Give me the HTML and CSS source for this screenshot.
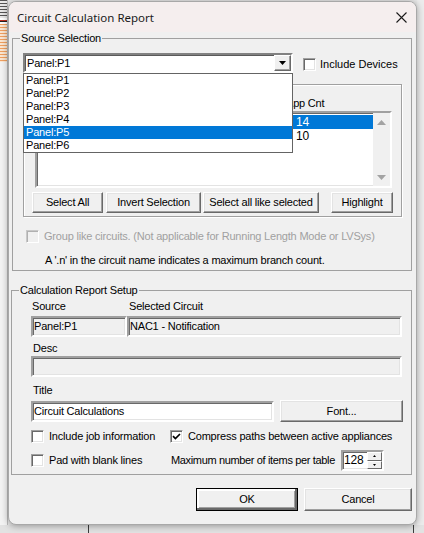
FILE: index.html
```html
<!DOCTYPE html>
<html>
<head>
<meta charset="utf-8">
<link rel="stylesheet" href="styles.css">
</head>
<body>
<div class="screen">
  <div class="top">
    <div class="side-left">
      <div class="sl-grip"></div>
      <div class="sl-red"></div>
      <div class="sl-orange"></div>
      <div class="sl-rest"></div>
    </div>
    <div class="dialog">
      <div class="titlebar">
        <span class="title">Circuit Calculation Report</span>
        <svg class="close" width="11" height="11" viewBox="0 0 11 11"><path d="M0.5 0.5 L10.5 10.5 M10.5 0.5 L0.5 10.5" stroke="#1a1a1a" stroke-width="1.1" fill="none"/></svg>
      </div>
      <div class="client">
        <fieldset class="group g1">
          <legend>Source Selection</legend>
          <div class="row1">
            <div class="combo">
              <span class="combo-text">Panel:P1</span>
              <span class="combo-btn"><svg width="7" height="4" viewBox="0 0 7 4"><path d="M0 0 H7 L3.5 4 Z" fill="#000"/></svg></span>
              <ul class="droplist">
                <li>Panel:P1</li>
                <li>Panel:P2</li>
                <li>Panel:P3</li>
                <li>Panel:P4</li>
                <li class="sel">Panel:P5</li>
                <li>Panel:P6</li>
              </ul>
            </div>
            <label class="chk incdev"><span class="box"></span>Include Devices</label>
          </div>
          <div class="listgroup">
            <div class="lv-head"><span class="h1"></span><span class="h2">App Cnt</span></div>
            <div class="lv">
              <div class="lv-rows">
                <div class="lv-row sel"><span class="c1"></span><span class="c2">14</span></div>
                <div class="lv-row"><span class="c1"></span><span class="c2">10</span></div>
              </div>
              <div class="vscroll">
                <svg width="9" height="5" viewBox="0 0 9 5"><path d="M0 5 H9 L4.5 0 Z" fill="#a3a3a3"/></svg>
                <svg width="9" height="5" viewBox="0 0 9 5"><path d="M0 0 H9 L4.5 5 Z" fill="#a3a3a3"/></svg>
              </div>
            </div>
            <div class="btnrow">
              <button class="btn b-all">Select All</button>
              <button class="btn b-inv">Invert Selection</button>
              <button class="btn b-like">Select all like selected</button>
              <button class="btn b-hl">Highlight</button>
            </div>
          </div>
          <label class="chk disabled grp"><span class="box"></span>Group like circuits. (Not applicable for Running Length Mode or LVSys)</label>
          <div class="note">A '.n' in the circuit name indicates a maximum branch count.</div>
        </fieldset>

        <fieldset class="group g2">
          <legend>Calculation Report Setup</legend>
          <div class="grid2">
            <div class="lbl">Source</div>
            <div class="lbl lbl2">Selected Circuit</div>
            <div class="field ro">Panel:P1</div>
            <div class="field ro">NAC1 - Notification</div>
          </div>
          <div class="lbl single">Desc</div>
          <div class="field ro wide"></div>
          <div class="lbl single ttl">Title</div>
          <div class="titlerow">
            <div class="field edit">Circuit Calculations</div>
            <button class="btn b-font">Font...</button>
          </div>
          <div class="optrow">
            <label class="chk opt1"><span class="box"></span>Include job information</label>
            <label class="chk"><span class="box"><svg width="9" height="9" viewBox="0 0 9 9"><path d="M1 4.2 L3.4 6.6 L8 2" stroke="#000" stroke-width="1.7" fill="none"/></svg></span>Compress paths between active appliances</label>
          </div>
          <div class="optrow2">
            <label class="chk opt1"><span class="box"></span>Pad with blank lines</label>
            <span class="maxlbl">Maximum number of items per table</span>
            <div class="spin">
              <span class="spin-val">128</span>
              <span class="spin-btns">
                <span class="sbtn"><svg width="3" height="2" viewBox="0 0 3 2"><path d="M0 2 H3 L1.5 0 Z" fill="#000"/></svg></span>
                <span class="sbtn"><svg width="3" height="2" viewBox="0 0 3 2"><path d="M0 0 H3 L1.5 2 Z" fill="#000"/></svg></span>
              </span>
            </div>
          </div>
        </fieldset>

        <div class="footer">
          <button class="btn b-ok">OK</button>
          <button class="btn b-cancel">Cancel</button>
        </div>
      </div>
    </div>
    <div class="side-right"></div>
  </div>
  <div class="bottom"></div>
</div>
</body>
</html>
```

FILE: styles.css
```css
* { box-sizing: border-box; }
html, body { margin: 0; padding: 0; }
body {
  width: 424px;
  height: 533px;
  overflow: hidden;
  background: #e8e8e8;
  font-family: "Liberation Sans", Arial, sans-serif;
  font-size: 11px;
  line-height: 13px;
  letter-spacing: -0.2px;
  color: #000;
}
.screen { display: flex; flex-direction: column; height: 533px; }
.top { display: flex; height: 525px; }

.side-left { width: 8px; display: flex; flex-direction: column; background: #ececec; border-right: 1px solid #bdbdbd; }
.sl-grip { height: 18px; background: repeating-linear-gradient(to bottom, #555 0 1px, #e8e8e8 1px 3px); }
.sl-red { height: 6px; background: linear-gradient(to bottom, #fff 0 2px, #c03020 2px 3px, #222 3px 4px, #fff 4px); }
.sl-orange { height: 38px; background: repeating-linear-gradient(to bottom, #f0a060 0 1px, #fbe6d2 1px 3px); }
.sl-rest { flex: 1; background: #f3f3f3; }
.side-right { flex: 1; background: #ececec; }

.dialog {
  margin-top: 1px;
  width: 409px;
  height: 524px;
  border: 1px solid #a8a8a8;
  border-radius: 8px;
  background: #f0f0f0;
  box-shadow: 0 1px 7px rgba(0,0,0,0.35);
  display: flex;
  flex-direction: column;
  overflow: hidden;
  position: relative;
  z-index: 1;
}
.titlebar {
  height: 30px;
  flex: none;
  background: #f5eeee;
  display: flex;
  align-items: center;
  padding-left: 8px;
}
.title { font-family: "Noto Sans", "Open Sans", sans-serif; font-size: 11.5px; letter-spacing: 0; color: #1a1a1a; flex: 1; }
.close { margin-right: 9px; }

.client { display: flex; flex-direction: column; }

.group {
  margin: 0;
  padding: 0;
  min-width: 0;
  border: 1px solid #a0a0a0;
  display: flex;
  flex-direction: column;
  align-items: flex-start;
}
.group legend {
  padding: 0 1px;
  margin-left: 7px;
  line-height: 13px;
  height: 13px;
}
.g1 { margin-left: 3px; width: 400px; padding-bottom: 3px; }
.g2 { margin-left: 2px; margin-top: 13px; width: 401px; padding-bottom: 3px; }

/* row 1 */
.row1 { display: flex; align-items: flex-start; margin-top: 8px; padding-left: 10px; }
.combo {
  position: relative;
  width: 270px;
  height: 20px;
  background: #fff;
  border-style: solid;
  border-width: 2px;
  border-color: #828282 #fff #fff #828282;
  box-shadow: inset 1px 1px 0 #5a5a5a;
  display: flex;
  align-items: center;
}
.combo-text { flex: 1; padding-left: 2px; }
.combo-btn {
  width: 17px;
  height: 16px;
  background: #f0f0f0;
  border: 1px solid;
  border-color: #fff #696969 #696969 #fff;
  box-shadow: inset -1px -1px 0 #a0a0a0;
  display: flex;
  align-items: center;
  justify-content: center;
}
.droplist {
  position: absolute;
  left: -2px;
  top: 18px;
  width: 270px;
  height: 80px;
  margin: 0;
  padding: 0;
  list-style: none;
  background: #fff;
  border: 1px solid #646464;
  z-index: 5;
}
.droplist li { height: 13px; line-height: 13px; padding-left: 2px; }
.droplist li.sel { background: #0078d7; color: #fff; }

.chk { display: flex; align-items: center; gap: 5px; white-space: nowrap; }
.box {
  width: 13px;
  height: 13px;
  flex: none;
  background: #fff;
  border: 1px solid;
  border-color: #a0a0a0 #fff #fff #a0a0a0;
  box-shadow: inset 1px 1px 0 #696969, inset -1px -1px 0 #e3e3e3;
  display: flex;
  align-items: center;
  justify-content: center;
}
.incdev { margin-left: 10px; margin-top: 5px; gap: 4px; letter-spacing: 0; }
.chk.disabled { color: #a0a0a0; }
.chk.disabled .box { background: #f0f0f0; border-color: #c8c8c8 #fff #fff #c8c8c8; box-shadow: inset 1px 1px 0 #b0b0b0; }
.grp { margin-left: 13px; margin-top: 13px; }
.note { margin-left: 32px; margin-top: 11px; }

/* inner list group */
.listgroup {
  margin-top: 11px;
  margin-left: 10px;
  width: 379px;
  height: 133px;
  border: 1px solid #a0a0a0;
  box-shadow: inset 1px 1px 0 #fff, 1px 1px 0 #fff;
  display: flex;
  flex-direction: column;
  align-items: flex-start;
}
.lv-head { margin-top: 12px; height: 13px; margin-left: 13px; display: flex; }
.lv-head .h1 { width: 249px; }
.lv {
  margin-top: 1px;
  margin-left: 11px;
  width: 357px;
  height: 77px;
  background: #fff;
  border: 2px solid;
  border-color: #a0a0a0 #fff #fff #a0a0a0;
  box-shadow: inset 1px 1px 0 #696969, inset -1px -1px 0 #e3e3e3;
  display: flex;
}
.lv-rows { flex: 1; padding-top: 2px; }
.lv-row { height: 14px; line-height: 14px; display: flex; font-size: 12px; }
.lv-row .c1 { width: 259px; padding-left: 2px; }
.lv-row.sel { background: #0078d7; color: #fff; }
.vscroll {
  width: 17px;
  background: #f0f0f0;
  display: flex;
  flex-direction: column;
  align-items: center;
  justify-content: space-between;
  padding: 7px 0 6px;
}
.btnrow { display: flex; margin-top: 4px; margin-left: 8px; }

.btn {
  font-family: "Liberation Sans", Arial, sans-serif;
  font-size: 11px;
  line-height: 13px;
  letter-spacing: -0.2px;
  color: #000;
  height: 21px;
  padding: 0;
  background: #f0f0f0;
  border: 1px solid;
  border-color: #fff #696969 #696969 #fff;
  box-shadow: inset -1px -1px 0 #a0a0a0, inset 1px 1px 0 #e3e3e3;
  border-radius: 0;
}
.b-all { width: 71px; }
.b-inv { width: 95px; margin-left: 3px; }
.b-like { width: 116px; margin-left: 2px; }
.b-hl { width: 62px; margin-left: 12px; }

/* setup */
.grid2 {
  display: grid;
  grid-template-columns: 96px 275px;
  margin-left: 19px;
  margin-top: 3px;
  row-gap: 3px;
}
.lbl { padding-left: 1px; height: 13px; }
.lbl2 { padding-left: 2px; }
.field {
  height: 21px;
  border: 2px solid;
  border-color: #a0a0a0 #fff #fff #a0a0a0;
  box-shadow: inset 1px 1px 0 #696969, inset -1px -1px 0 #e3e3e3;
  display: flex;
  align-items: center;
  padding-left: 1px;
  white-space: nowrap;
}
.field.ro { background: #f0f0f0; }
.field.edit { background: #fff; width: 243px; }
.single { margin-left: 20px; margin-top: 5px; }
.wide { margin-left: 19px; margin-top: 1px; width: 371px; }
.ttl { margin-top: 7px; }
.titlerow { display: flex; align-items: flex-start; margin-left: 19px; margin-top: 3px; }
.titlerow .field { margin-top: 1px; }
.b-font { width: 123px; height: 22px; margin-left: 6px; }

.optrow { display: flex; margin-left: 19px; margin-top: 8px; height: 13px; }
.opt1 { width: 139px; }
.optrow2 { display: flex; align-items: center; margin-left: 19px; margin-top: 7px; height: 21px; width: 353px; }
.optrow2 .opt1 { width: 140px; }
.maxlbl { flex: 1; white-space: nowrap; letter-spacing: -0.35px; }
.spin {
  width: 43px;
  height: 21px;
  flex: none;
  background: #fff;
  border: 2px solid;
  border-color: #a0a0a0 #fff #fff #a0a0a0;
  box-shadow: inset 1px 1px 0 #696969, inset -1px -1px 0 #e3e3e3;
  display: flex;
  align-items: center;
}
.spin-val { flex: 1; padding-left: 1px; font-size: 12px; }
.spin-btns { display: flex; flex-direction: column; width: 15px; height: 17px; }
.sbtn {
  flex: 1;
  background: #f0f0f0;
  border: 1px solid;
  border-color: #fff #696969 #696969 #fff;
  display: flex;
  align-items: center;
  justify-content: center;
}

.footer { display: flex; justify-content: flex-end; margin-top: 13px; padding-right: 4px; gap: 6px; }
.b-ok { width: 102px; height: 23px; outline: 1px solid #000; outline-offset: -1px; box-shadow: inset -2px -2px 0 #696969, inset 2px 2px 0 #fff, inset -3px -3px 0 #a0a0a0; }
.b-cancel { width: 108px; height: 23px; }

.bottom {
  height: 8px;
  background:
    linear-gradient(to right, transparent 88px, #3c3c3c 88px 89px, transparent 89px 413px, #3c3c3c 413px 414px, transparent 414px),
    #e2e2e2;
}
```
